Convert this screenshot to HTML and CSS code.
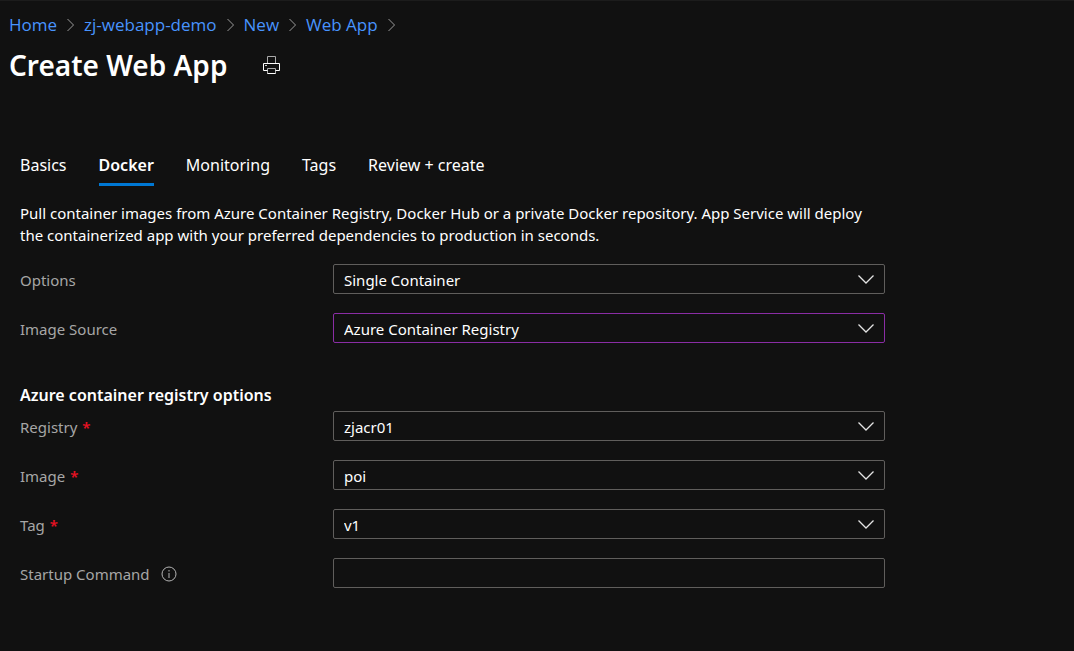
FILE: index.html
```html
<!DOCTYPE html>
<html lang="en">
<head>
<meta charset="utf-8">
<meta name="viewport" content="width=device-width, initial-scale=1">
<title>Create Web App</title>
<link rel="stylesheet" href="styles.css">
</head>
<body>
<svg class="sprite" aria-hidden="true">
  <symbol id="crumb" viewBox="0 0 8 14"><path d="M1 1l6 6-6 6"/></symbol>
  <symbol id="down" viewBox="0 0 16 9"><path d="M.5 .5L8 8 15.500 .5"/></symbol>
</svg>
<header class="header">
  <nav class="crumbs" aria-label="Breadcrumb">
    <a class="crumb-link" href="#">Home</a><svg class="crumb-icon"><use href="#crumb"/></svg>
    <a class="crumb-link" href="#">zj-webapp-demo</a><svg class="crumb-icon"><use href="#crumb"/></svg>
    <a class="crumb-link" href="#">New</a><svg class="crumb-icon"><use href="#crumb"/></svg>
    <a class="crumb-link" href="#">Web App</a><svg class="crumb-icon"><use href="#crumb"/></svg>
  </nav>
  <div class="title-row">
    <h1 class="title">Create Web App</h1>
    <button class="print" type="button" aria-label="Print">
      <svg class="print-icon" viewBox="0 0 18 18"><path class="print-paper" d="M4.500 7V.5h8V7M4.500 12.500h8v5h-8z"/><path d="M4.500 14.500h-4v-7h16v7h-4M4.500 17.500h8"/><path class="print-dot" d="M2 9h2v1H2z"/></svg>
    </button>
  </div>
</header>
<main class="content">
  <nav class="tabs" role="tablist">
    <button class="tab" type="button" role="tab">Basics</button>
    <button class="tab tab-active" type="button" role="tab" aria-selected="true">Docker</button>
    <button class="tab" type="button" role="tab">Monitoring</button>
    <button class="tab" type="button" role="tab">Tags</button>
    <button class="tab" type="button" role="tab">Review + create</button>
  </nav>
  <p class="intro">Pull container images from Azure Container Registry, Docker Hub or a private Docker repository. App Service will deploy the containerized app with your preferred dependencies to production in seconds.</p>
  <form class="form">
    <div class="fields">
      <label class="label" for="options">Options</label>
      <div class="picker"><select class="control" id="options"><option>Single Container</option></select><svg class="down"><use href="#down"/></svg></div>
      <label class="label" for="source">Image Source</label>
      <div class="picker"><select class="control control-changed" id="source"><option>Azure Container Registry</option></select><svg class="down"><use href="#down"/></svg></div>
    </div>
    <h2 class="section">Azure container registry options</h2>
    <div class="fields">
      <label class="label" for="registry">Registry <span class="required">*</span></label>
      <div class="picker"><select class="control" id="registry"><option>zjacr01</option></select><svg class="down"><use href="#down"/></svg></div>
      <label class="label" for="image">Image <span class="required">*</span></label>
      <div class="picker"><select class="control" id="image"><option>poi</option></select><svg class="down"><use href="#down"/></svg></div>
      <label class="label" for="tag">Tag <span class="required">*</span></label>
      <div class="picker"><select class="control" id="tag"><option>v1</option></select><svg class="down"><use href="#down"/></svg></div>
      <label class="label" for="command">Startup Command
        <svg class="info" viewBox="0 0 16 16"><circle cx="8" cy="8" r="7"/><path d="M8 7v5M8 4v1.500"/></svg>
      </label>
      <input class="control" id="command" type="text">
    </div>
  </form>
</main>
</body>
</html>
```
FILE: styles.css
```css
* { box-sizing: border-box; }

body {
  margin: 0;
  min-height: 100vh;
  border-top: 1px solid #1c1c1c;
  background: #111;
  color: #fff;
  font: 15px/22px "Segoe UI", "Noto Sans", "Open Sans", sans-serif;
}

.sprite { display: none; }
svg { flex: none; fill: none; }

.header { padding: 12px 9px 0; }

.crumbs {
  display: flex;
  align-items: center;
  gap: 9px;
  font-family: "Segoe UI", "Open Sans", sans-serif;
  font-size: 17px;
  line-height: 24px;
}
.crumb-link { color: #4894fe; text-decoration: none; }
.crumb-icon { width: 9px; height: 14px; stroke: #9a9a9a; }

.title-row {
  display: flex;
  align-items: center;
  gap: 36px;
  padding-top: 8px;
}
.title { margin: 0; font-size: 28px; line-height: 40px; font-weight: 600; }
.print {
  display: flex;
  padding: 0;
  border: 0;
  background: none;
}
.print-icon { width: 18px; height: 18px; stroke: #fff; }
.print-paper { stroke: #aaa; }
.print-dot { fill: #ccc; stroke: none; }

.content { max-width: 905px; padding: 68px 20px 40px; }

.tabs { display: flex; gap: 32px; }
.tab {
  padding: 0 0 6px;
  border: 0;
  border-bottom: 3px solid transparent;
  background: none;
  color: #fff;
  font: inherit;
  font-size: 16px;
  line-height: 24px;
}
.tab-active { border-bottom-color: #0078d4; font-weight: 600; }

.intro { margin: 16px 0 18px; }

.fields {
  display: grid;
  grid-template-columns: 313px 1fr;
  row-gap: 19px;
}
.label {
  display: flex;
  align-items: center;
  gap: 5px;
  padding-top: 2px;
  color: #a6a6a6;
}
.required { color: #e81123; font-weight: 600; }
.info { width: 16px; height: 16px; margin-left: 6px; stroke: #b4b4b4; }

.picker { display: grid; align-items: center; }
.picker > * { grid-area: 1 / 1; }
.control {
  width: 100%;
  height: 30px;
  padding: 2px 40px 0 10px;
  border: 1px solid #605e5c;
  border-radius: 2px;
  background: #111;
  color: #fff;
  font: inherit;
  appearance: none;
}
.control-changed { border-color: #8a2da5; }
.down {
  width: 16px;
  height: 9px;
  justify-self: end;
  margin-right: 11px;
  stroke: #e4e4e4;
  stroke-width: 1.3;
  pointer-events: none;
}

.section { margin: 40px 0 4px; font-size: 16px; line-height: 24px; font-weight: 600; }
```
